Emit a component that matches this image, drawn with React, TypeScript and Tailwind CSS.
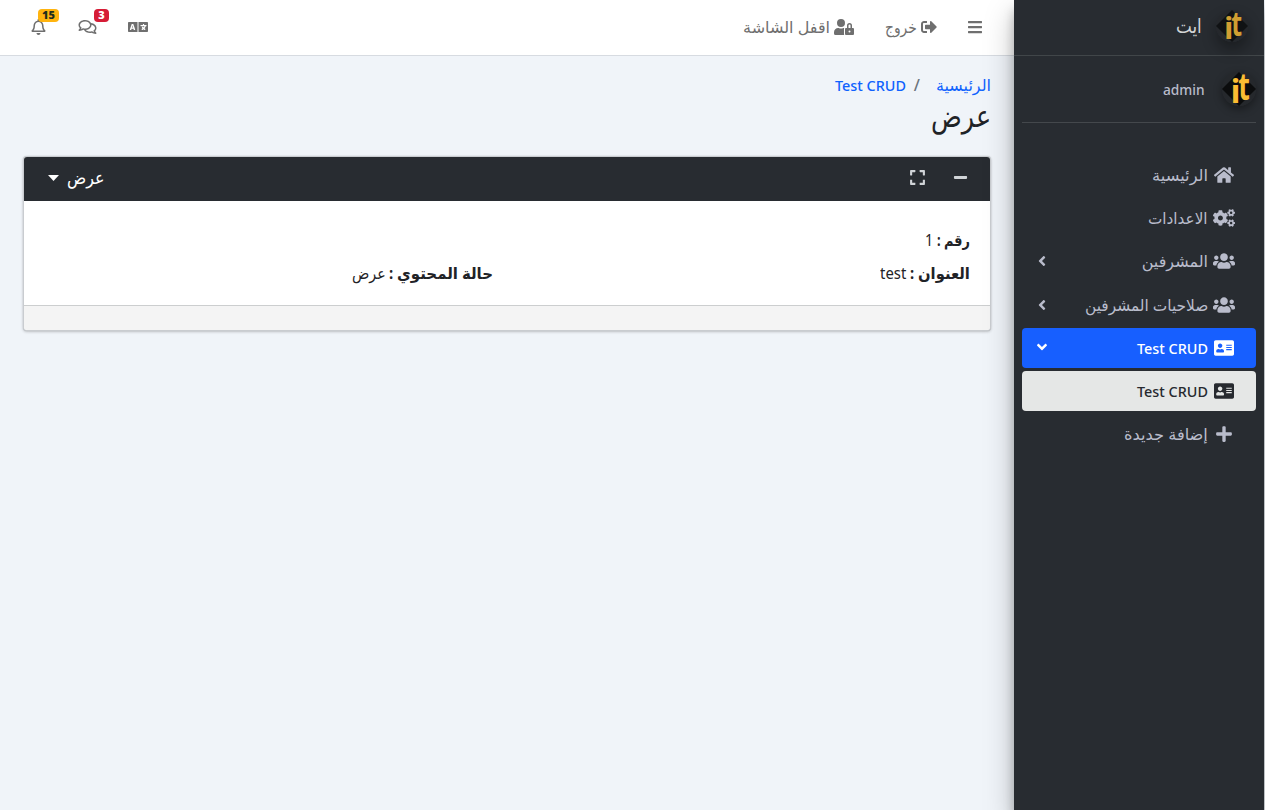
import { useLayoutEffect, useRef, type ReactNode } from 'react';
import {
  FaAddressCard, FaAngleDown, FaAngleLeft, FaBars, FaCogs, FaExpand, FaHome, FaLanguage,
  FaMinus, FaPlus, FaRegBell, FaRegComments, FaSignOutAlt, FaUserLock, FaUsers,
} from 'react-icons/fa';

function Label({ className, children }: { className: string; children: ReactNode }) {
  const box = useRef<HTMLSpanElement>(null);
  const text = useRef<HTMLSpanElement>(null);
  useLayoutEffect(() => {
    if (box.current && text.current) {
      text.current.style.transform = `scaleX(${box.current.clientWidth / text.current.offsetWidth})`;
    }
  }, []);
  return (
    <span ref={box} className={`block shrink-0 whitespace-nowrap ${className}`}>
      <span ref={text} className="inline-block origin-right">{children}</span>
    </span>
  );
}

function Logo({ className }: { className: string }) {
  return (
    <svg viewBox="0 0 34 34" direction="ltr" className={`shrink-0 overflow-visible rounded-full ${className}`}>
      <circle cx="17" cy="17" r="17" fill="#25282c" />
      <path d="M17 0 34 17 17 34 0 17Z" fill="#0b0c0d" />
      <g fontFamily="Open Sans" fontWeight="700" fill="#fbbc33">
        <text transform="translate(8.6 30.5) scale(1 .96)" fontSize="33">i</text>
        <text transform="translate(16.2 27.8) scale(.72 1)" fontSize="37">t</text>
      </g>
    </svg>
  );
}

const items = [
  { icon: FaHome, text: 'الرئيسية', width: 'w-[56px] text-base', arrow: '', style: 'text-[#b9bccb]' },
  { icon: FaCogs, text: 'الاعدادات', width: 'w-[60px] text-base', arrow: '', style: 'text-[#b9bccb]' },
  { icon: FaUsers, text: 'المشرفين', width: 'w-[66px] text-base', arrow: 'left', style: 'text-[#b9bccb]' },
  { icon: FaUsers, text: 'صلاحيات المشرفين', width: 'w-[123px] text-base', arrow: 'left', style: 'text-[#b9bccb]' },
  { icon: FaAddressCard, text: 'Test CRUD', width: 'w-[71px] text-[15px]', arrow: 'down', style: 'bg-[#175fff] text-white' },
  { icon: FaAddressCard, text: 'Test CRUD', width: 'w-[71px] text-[15px]', arrow: '', style: 'bg-[#e5e7e6] text-[#272a2f]' },
  { icon: FaPlus, text: 'إضافة جديدة', width: 'w-[84px] text-base', arrow: '', style: 'text-[#b9bccb]' },
];

function Sidebar() {
  return (
    <aside className="z-10 h-full w-[250px] shrink-0 bg-[#282c31] font-medium shadow-[0_14px_28px_rgba(0,0,0,.25),0_10px_10px_rgba(0,0,0,.22)]">
      <div className="flex h-14 items-center border-b border-[#414649] pr-4 pb-1 text-[#d3d5d6]">
        <Logo className="size-8 opacity-80 shadow-[0_8px_14px_rgba(0,0,0,.4)]" />
        <Label className="mr-[14px] w-[26px] text-xl">ايت</Label>
      </div>
      <div className="mx-2 flex h-[67px] items-center border-b border-[#44484c] text-[#b9bccb]">
        <Logo className="size-[34px] shadow-[0_3px_8px_rgba(0,0,0,.4)]" />
        <Label className="mr-[17px] w-[42px] text-[15px]">admin</Label>
      </div>
      <nav className="mx-2 mt-8 flex flex-col gap-[3.2px]">
        {items.map(({ icon: Icon, text, width, arrow, style }, i) => (
          <a key={i} className={`flex h-10 items-center rounded pr-5 pl-[9px] ${style}`}>
            <span className="flex w-6 shrink-0 justify-center">
              <Icon className={Icon === FaUsers || Icon === FaCogs ? 'h-[18px] w-[22px]' : Icon === FaPlus ? 'size-[18px]' : 'h-[18px] w-5'} />
            </span>
            <Label className={`mr-1 ${width}`}>{text}</Label>
            {arrow === 'left' && <FaAngleLeft className="mr-auto ml-[3px] size-4" />}
            {arrow === 'down' && <FaAngleDown className="mr-auto mb-px ml-[3px] size-4" />}
          </a>
        ))}
      </nav>
    </aside>
  );
}

function Navbar() {
  return (
    <header className="flex h-14 items-center border-b border-[#d7dbe1] bg-white pr-[31px] pb-[2px] pl-[31px] font-medium text-[#6f6f6f]">
      <FaBars className="size-4" />
      <div className="mr-[30px] flex items-center">
        <FaSignOutAlt className="size-4" />
        <Label className="mr-1 w-[32px] text-base">خروج</Label>
      </div>
      <div className="mr-[31px] flex items-center">
        <FaUserLock className="h-4 w-5" />
        <Label className="mr-1 w-[87px] text-base">اقفل الشاشة</Label>
      </div>
      <div className="mr-auto flex items-center">
        <FaLanguage className="h-4 w-5" />
        <div className="relative mr-[31px]">
          <FaRegComments className="h-4 w-[19px]" />
          <span className="absolute -top-[10px] left-4 flex h-[13px] w-[15px] items-center justify-center rounded bg-[#d61c36] pt-px font-['Open_Sans',sans-serif] text-[11px] font-extrabold text-white">3</span>
        </div>
        <div className="relative mr-8">
          <FaRegBell className="h-4 w-[15px]" />
          <span className="absolute -top-[10px] left-[7px] flex h-[13px] w-[21px] items-center justify-center rounded bg-[#ffb40f] pt-px font-['Open_Sans',sans-serif] text-[11px] font-extrabold text-[#1f2d1d]">15</span>
        </div>
      </div>
    </header>
  );
}

function Field({ name, value, nameWidth, valueWidth }: { name: string; value: string; nameWidth: string; valueWidth: string }) {
  return (
    <div className="flex h-[33px] items-center">
      <Label className={`font-bold ${nameWidth}`}>{name} :</Label>
      <Label className={`mr-1 ${valueWidth}`}>{value}</Label>
    </div>
  );
}

export default function App() {
  return (
    <div dir="rtl" className="flex h-[810px] w-[1265px] overflow-hidden bg-[#f0f4f9] pr-px font-['Noto_Sans','DejaVu_Sans',sans-serif] text-base text-[#1f2327]">
      <Sidebar />
      <div className="min-w-0 flex-1">
        <Navbar />
        <main className="px-[23px] pt-[17px]">
          <div className="flex h-6 items-center font-medium text-[#0f62fe]">
            <Label className="w-[55px]">الرئيسية</Label>
            <span className="mr-4 text-[#6c757d]">/</span>
            <Label className="mr-2 w-[71px] text-[15px]">Test CRUD</Label>
          </div>
          <h1 className="flex h-10 items-center pb-[5px] text-[31px] leading-8"><Label className="w-[60px]">عرض</Label></h1>
          <section className="mt-[19px] overflow-hidden rounded border border-[#c9ccd0] bg-white shadow-[0_0_1px_rgba(0,0,0,.2),0_1px_3px_rgba(0,0,0,.2)]">
            <div className="flex h-11 items-center bg-[#282c31] pr-[22px] pl-6 text-[#d0d4d7]">
              <FaMinus className="mb-1 size-[15px]" />
              <FaExpand className="mr-[27px] mb-1 size-[17px]" />
              <div className="mr-auto flex items-center gap-2 text-white">
                <Label className="mb-[3px] w-[37px] text-[18px] font-medium">عرض</Label>
                <svg viewBox="0 0 11 6" className="mb-[3px] h-[6px] w-[11px]"><path d="M0 0H11L5.5 6Z" fill="white" /></svg>
              </div>
            </div>
            <div className="grid h-[104px] grid-cols-2 content-start gap-x-[27px] px-5 pt-[22px]">
              <div className="col-span-2"><Field name="رقم" value="1" nameWidth="w-[33px]" valueWidth="w-[8px]" /></div>
              <Field name="العنوان" value="test" nameWidth="w-[60px]" valueWidth="w-[26px]" />
              <Field name="حالة المحتوي" value="عرض" nameWidth="w-[104px]" valueWidth="w-[34px]" />
            </div>
            <div className="h-[25px] border-t border-[#cccecf] bg-[#f4f4f4]" />
          </section>
        </main>
      </div>
    </div>
  );
}
